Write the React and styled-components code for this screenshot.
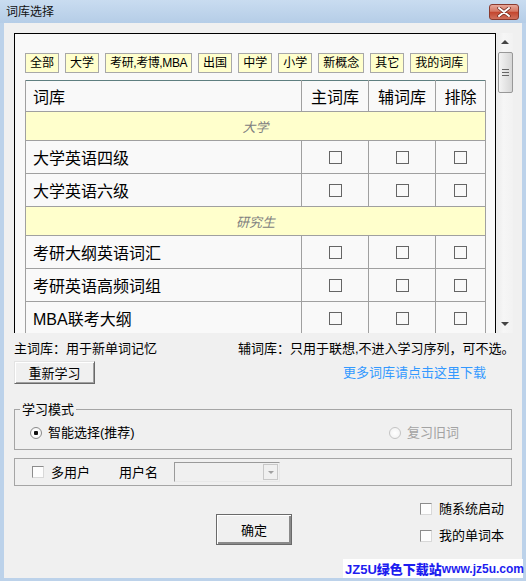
import styled, { createGlobalStyle } from 'styled-components'

const GlobalStyle = createGlobalStyle`
  html, body {
    margin: 0;
    padding: 0;
    background: #fff;
  }
  body {
    font-family: "Liberation Sans", "Noto Sans CJK SC", sans-serif;
    font-size: 13px;
    color: #000;
  }
`

// window chrome
const Window = styled.div`
  position: relative;
  width: 526px;
  height: 581px;
  display: flex;
  flex-direction: column;
  background: #bcd2ea;
`

const TitleBar = styled.div`
  height: 23px;
  flex: none;
  display: flex;
  align-items: center;
  justify-content: space-between;
  padding: 0 7px 0 6px;
  background: linear-gradient(#c9dcf0, #b5cde7);
  font-size: 12px;
  line-height: 14px;
  color: #111;
`

const CloseBtn = styled.div`
  width: 30px;
  height: 16px;
  box-sizing: border-box;
  border: 1px solid #8a3b2f;
  border-radius: 3px;
  display: flex;
  align-items: center;
  justify-content: center;
  background: linear-gradient(#e7a89a 0%, #d57764 45%, #c4462f 52%, #d0705c 100%);
`

const Body = styled.div`
  flex: 1;
  margin: 0 4px 3px;
  padding: 10px 9px 0 10px;
  background: #f0f0f0;
  display: flex;
  flex-direction: column;
`

// list panel
const ListRow = styled.div`
  display: flex;
  gap: 1px;
  height: 300px;
`

const ListBox = styled.div`
  width: 482px;
  box-sizing: border-box;
  border: 1px solid #000;
  border-bottom: none;
  background: #f9f9f9;
  padding: 19px 10px 0;
  overflow: hidden;
`

const TagRow = styled.div`
  display: flex;
  gap: 6px;
  margin-bottom: 7px;
`

const Tag = styled.span`
  height: 20px;
  box-sizing: border-box;
  padding: 0 4px;
  border: 1px solid #a8a8a8;
  background: #ffffcc;
  font-size: 12px;
  line-height: 18px;
  white-space: nowrap;
  letter-spacing: ${p => (p.$tight ? '-0.4px' : '0')};
`

const Table = styled.table`
  width: 461px;
  border-collapse: collapse;
  table-layout: fixed;
  border-top: 1px solid #5f7f80;
  border-right: 1px solid #5f7f80;
  border-left: 1px solid #929a9a;
`

const Th = styled.td`
  height: 30px;
  padding: 0 0 0 ${p => (p.$left ? '7px' : '0')};
  text-align: ${p => (p.$left ? 'left' : 'center')};
  font-size: 16px;
  border: 1px solid #a0a0a0;
  border-top: none;
`

const CatCell = styled.td`
  height: 28px;
  padding: 0;
  background: #ffffcc;
  text-align: center;
  font-style: italic;
  font-size: 13px;
  color: #808080;
  border: 1px solid #a0a0a0;
`

const Td = styled.td`
  height: 32px;
  padding: 0 0 0 ${p => (p.$left ? '7px' : '0')};
  text-align: ${p => (p.$left ? 'left' : 'center')};
  font-size: 16px;
  border: 1px solid #a0a0a0;
  white-space: nowrap;
`

const CellBox = styled.span`
  display: inline-block;
  width: 13px;
  height: 13px;
  box-sizing: border-box;
  border: 1px solid #656565;
  vertical-align: middle;
`

const ScrollBar = styled.div`
  width: 16px;
  height: 300px;
  background: linear-gradient(90deg, #ececec, #f6f6f6 40%, #f2f2f2);
  display: flex;
  flex-direction: column;
  align-items: center;
`

const Arrow = styled.div`
  height: 18px;
  width: 100%;
  display: flex;
  align-items: center;
  justify-content: center;
  &::after {
    content: '';
    border-left: 4px solid transparent;
    border-right: 4px solid transparent;
    ${p => (p.$down ? 'border-top: 4px solid #444;' : 'border-bottom: 4px solid #444;')}
  }
`

const Thumb = styled.div`
  width: 15px;
  height: 41px;
  margin-top: 1px;
  box-sizing: border-box;
  border: 1px solid #989898;
  border-radius: 2px;
  background: linear-gradient(90deg, #f4f4f4, #e2e2e2 60%, #d6d6d6);
  display: flex;
  flex-direction: column;
  align-items: center;
  justify-content: center;
  gap: 2px;
  & > i {
    display: block;
    width: 7px;
    height: 1px;
    background: #666;
  }
`

const Track = styled.div`
  flex: 1;
`

// below panel
const InfoRow = styled.div`
  margin-top: 8px;
  display: grid;
  grid-template-columns: 224px auto;
  line-height: 15px;
  white-space: nowrap;
`

const ActionRow = styled.div`
  margin-top: 5px;
  display: flex;
  align-items: center;
  justify-content: space-between;
  padding-right: 27px;
`

const Button = styled.button`
  width: ${p => p.$w || 81}px;
  height: ${p => p.$h || 23}px;
  padding: 0;
  font: inherit;
  font-size: 13px;
  color: #000;
  background: #f0f0f0;
  border: 1px solid;
  border-color: #e3e3e3 #696969 #696969 #e3e3e3;
  box-shadow: inset 1px 1px #fff, inset -1px -1px #a0a0a0;
`

const OkButton = styled(Button)`
  margin: 13px 0 0 202px;
  border-color: #6a6a6a;
  box-shadow: inset 1px 1px #fff, inset -2px -2px #8a8a8a;
`

const Link = styled.span`
  color: #3399ff;
  line-height: 15px;
`

const Group = styled.fieldset`
  margin: 18px 1px 0 0;
  padding: 8px 0 9px 0;
  min-width: 0;
  border: 1px solid #a5a5a5;
`

const Legend = styled.legend`
  padding: 0 2px;
  margin-left: 5px;
  line-height: 15px;
`

const RadioRow = styled.div`
  padding-left: 15px;
  display: grid;
  grid-template-columns: 359px auto;
  align-items: center;
  line-height: 15px;
`

const Option = styled.label`
  display: flex;
  align-items: center;
  gap: ${p => p.$gap || 6}px;
  color: ${p => (p.$disabled ? '#a3a3a3' : '#000')};
  white-space: nowrap;
  line-height: 15px;
`

const Radio = styled.span`
  width: 12px;
  height: 12px;
  box-sizing: border-box;
  border-radius: 50%;
  border: 1px solid ${p => (p.$disabled ? '#c4c4c4' : '#8a8a8a')};
  background: radial-gradient(circle, ${p => (p.$on ? '#111 0, #111 2px, #fff 2.5px' : '#fff 0')}, #f2f2f2 80%);
`

const Check = styled.span`
  width: 12px;
  height: 12px;
  flex: none;
  box-sizing: border-box;
  border: 1px solid;
  border-color: #8c8c8c #d8d8d8 #d8d8d8 #8c8c8c;
  background: #fdfdfd;
`

const UserGroup = styled.div`
  margin: 8px 1px 0 0;
  height: 28px;
  box-sizing: border-box;
  border: 1px solid #a5a5a5;
  display: flex;
  align-items: center;
  padding-left: 17px;
`

const Spaced = styled.span`
  margin-left: ${p => p.$m}px;
  line-height: 15px;
`

const Combo = styled.div`
  margin-left: 16px;
  width: 106px;
  height: 20px;
  box-sizing: border-box;
  border: 1px solid;
  border-color: #9a9a9a #e8e8e8 #e8e8e8 #9a9a9a;
  background: #f0f0f0;
  display: flex;
  justify-content: flex-end;
  padding: 1px;
`

const ComboBtn = styled.div`
  width: 15px;
  box-sizing: border-box;
  border: 1px solid #c8c8c8;
  display: flex;
  align-items: center;
  justify-content: center;
  &::after {
    content: '';
    border-left: 3px solid transparent;
    border-right: 3px solid transparent;
    border-top: 3px solid #a0a0a0;
  }
`

const BottomRow = styled.div`
  margin-top: 15px;
  display: flex;
  align-items: flex-start;
`

const CheckCol = styled.div`
  margin-left: 128px;
  display: flex;
  flex-direction: column;
  gap: 12px;
`

const Watermark = styled.div`
  position: absolute;
  right: 3px;
  bottom: 3px;
  width: 180px;
  height: 19px;
  box-sizing: border-box;
  padding-left: 2px;
  background: #fff;
  display: flex;
  align-items: center;
  color: #1d1df0;
  font-weight: bold;
  white-space: nowrap;
  b { font-size: 13px; }
  span { font-size: 12px; }
`

const tags = ['全部', '大学', '考研,考博,MBA', '出国', '中学', '小学', '新概念', '其它', '我的词库']

const sections = [
  { name: '大学', items: ['大学英语四级', '大学英语六级'] },
  { name: '研究生', items: ['考研大纲英语词汇', '考研英语高频词组', 'MBA联考大纲'] },
]

function App() {
  return (
    <>
      <GlobalStyle />
      <Window>
        <TitleBar>
          <span>词库选择</span>
          <CloseBtn>
            <svg width="14" height="10" viewBox="0 0 14 10">
              <path d="M2 1 L12 9 M12 1 L2 9" stroke="#6b2a20" strokeWidth="3.4" strokeLinecap="round" />
              <path d="M2 1 L12 9 M12 1 L2 9" stroke="#fff" strokeWidth="2" strokeLinecap="round" />
            </svg>
          </CloseBtn>
        </TitleBar>
        <Body>
          <ListRow>
            <ListBox>
              <TagRow>
                {tags.map(t => <Tag key={t} $tight={/[A-Z]/.test(t)}>{t}</Tag>)}
              </TagRow>
              <Table>
                <colgroup>
                  <col style={{ width: 276 }} />
                  <col style={{ width: 67 }} />
                  <col style={{ width: 67 }} />
                  <col />
                </colgroup>
                <tbody>
                  <tr>
                    <Th $left>词库</Th>
                    <Th>主词库</Th>
                    <Th>辅词库</Th>
                    <Th>排除</Th>
                  </tr>
                  {sections.map(s => (
                    <>
                      <tr key={s.name}>
                        <CatCell colSpan={4}>{s.name}</CatCell>
                      </tr>
                      {s.items.map(item => (
                        <tr key={item}>
                          <Td $left>{item}</Td>
                          <Td><CellBox /></Td>
                          <Td><CellBox /></Td>
                          <Td><CellBox /></Td>
                        </tr>
                      ))}
                    </>
                  ))}
                </tbody>
              </Table>
            </ListBox>
            <ScrollBar>
              <Arrow />
              <Thumb><i /><i /><i /></Thumb>
              <Track />
              <Arrow $down />
            </ScrollBar>
          </ListRow>

          <InfoRow>
            <span>主词库：用于新单词记忆</span>
            <span>辅词库：只用于联想,不进入学习序列，可不选。</span>
          </InfoRow>

          <ActionRow>
            <Button>重新学习</Button>
            <Link>更多词库请点击这里下载</Link>
          </ActionRow>

          <Group>
            <Legend>学习模式</Legend>
            <RadioRow>
              <Option><Radio $on />智能选择(推荐)</Option>
              <Option $disabled><Radio $disabled />复习旧词</Option>
            </RadioRow>
          </Group>

          <UserGroup>
            <Option $gap={7}><Check />多用户</Option>
            <Spaced $m={29}>用户名</Spaced>
            <Combo><ComboBtn /></Combo>
          </UserGroup>

          <BottomRow>
            <OkButton $w={76} $h={31}>确定</OkButton>
            <CheckCol>
              <Option $gap={7}><Check />随系统启动</Option>
              <Option $gap={7}><Check />我的单词本</Option>
            </CheckCol>
          </BottomRow>
        </Body>
        <Watermark>
          <b>JZ5U绿色下载站</b>
          <span>www.jz5u.com</span>
        </Watermark>
      </Window>
    </>
  )
}

export default App
